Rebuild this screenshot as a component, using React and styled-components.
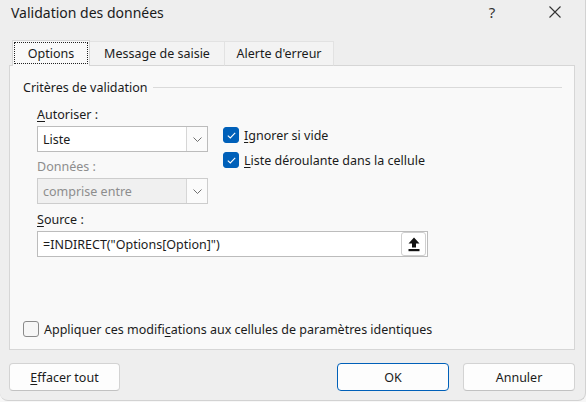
import React from 'react'
import styled, { createGlobalStyle } from 'styled-components'

const GlobalStyle = createGlobalStyle`
  html, body {
    margin: 0;
    padding: 0;
    background: #f7f7f7;
  }
  body {
    font-family: 'Noto Sans', 'Open Sans', sans-serif;
    font-size: 12.5px;
    color: #1b1b1b;
  }
`

const Dialog = styled.div`
  width: 586px;
  height: 401px;
  box-sizing: border-box;
  background: #eeeeee;
  border-right: 1px solid #d2d2d2;
  border-bottom: 1px solid #d2d2d2;
  border-radius: 0 0 8px 8px;
  display: flex;
  flex-direction: column;
  overflow: hidden;
`

const TitleBar = styled.div`
  height: 24px;
  display: flex;
  align-items: center;
  padding: 0 10px 0 11px;
`

const Title = styled.div`
  flex: 1;
  font-size: 14px;
  color: #1a1a1a;
`

const TitleButton = styled.div`
  width: 40px;
  height: 24px;
  display: flex;
  align-items: center;
  justify-content: center;
  font-size: 15px;
  color: #333;
  margin-left: ${p => p.gap || 0}px;
`

const Body = styled.div`
  flex: 1;
  display: flex;
  flex-direction: column;
  padding: 16px 10px 0 9px;
`

const TabRow = styled.div`
  display: flex;
  align-items: flex-end;
  height: 26px;
  padding-left: 3px;
  position: relative;
  z-index: 1;
  margin-bottom: -1px;
`

const Tab = styled.div`
  box-sizing: border-box;
  width: ${p => p.width}px;
  height: ${p => (p.active ? 26 : 25)}px;
  display: flex;
  align-items: center;
  justify-content: center;
  background: ${p => (p.active ? '#f9f9f9' : '#f3f3f3')};
  border: 1px solid ${p => (p.active ? '#d6d6d6' : '#e2e2e2')};
  border-bottom: ${p => (p.active ? 'none' : '1px solid #d6d6d6')};
  border-left: ${p => (p.noLeft ? 'none' : undefined)};
  padding: ${p => (p.active ? '1px 1px 2px' : '0 0 1px')};
`

const FocusRing = styled.span`
  flex: 1;
  align-self: stretch;
  display: flex;
  align-items: center;
  justify-content: center;
  border: 1px dotted #222;
`

const Panel = styled.div`
  box-sizing: border-box;
  height: 285px;
  background: #f9f9f9;
  border: 1px solid #d6d6d6;
  padding: 12px 12px 12px 13px;
  display: flex;
  flex-direction: column;
`

const GroupHeader = styled.div`
  display: flex;
  align-items: center;
  gap: 5px;
  height: 18px;
  &::after {
    content: '';
    flex: 1;
    height: 1px;
    background: #dadada;
  }
`

const GroupBody = styled.div`
  padding-left: 14px;
  display: flex;
  flex-direction: column;
`

const Label = styled.div`
  height: 17px;
  line-height: 17px;
  margin-top: ${p => p.top || 0}px;
  color: ${p => (p.disabled ? '#8d8d8d' : '#1b1b1b')};
`

const Key = styled.span`
  text-decoration: underline;
  text-underline-offset: 2px;
`

const FieldRow = styled.div`
  display: flex;
  gap: 15px;
  margin-top: 3px;
`

const LeftColumn = styled.div`
  width: 171px;
  display: flex;
  flex-direction: column;
`

const CheckColumn = styled.div`
  display: flex;
  flex-direction: column;
  gap: 9px;
  padding-top: 1px;
`

const Select = styled.div`
  box-sizing: border-box;
  height: 26px;
  display: flex;
  background: ${p => (p.disabled ? '#f0f0f0' : '#ffffff')};
  border: 1px solid ${p => (p.disabled ? '#cdcdcd' : '#bcbcbc')};
  margin-top: ${p => p.top || 0}px;
`

const SelectValue = styled.div`
  flex: 1;
  display: flex;
  align-items: center;
  padding-left: 5px;
  color: ${p => (p.disabled ? '#8d8d8d' : '#1b1b1b')};
`

const SelectButton = styled.div`
  width: 20px;
  display: flex;
  align-items: center;
  justify-content: center;
  background: #fbfbfb;
  border-left: 1px solid #d6d6d6;
`

const CheckRow = styled.label`
  display: flex;
  align-items: center;
  gap: 5px;
  height: 16px;
`

const Box = styled.span`
  box-sizing: border-box;
  width: 16px;
  height: 16px;
  border-radius: 3px;
  display: flex;
  align-items: center;
  justify-content: center;
  background: ${p => (p.checked ? '#0060b9' : '#f6f6f6')};
  border: 1px solid ${p => (p.checked ? '#0060b9' : '#8a8a8a')};
`

const SourceInput = styled.div`
  box-sizing: border-box;
  width: 391px;
  height: 26px;
  margin-top: 3px;
  display: flex;
  align-items: center;
  background: #ffffff;
  border: 1px solid #bcbcbc;
  padding: 0 1px 0 5px;
`

const SourceText = styled.div`
  flex: 1;
`

const RefButton = styled.div`
  box-sizing: border-box;
  width: 25px;
  height: 24px;
  border: 1px solid #cfcfcf;
  border-radius: 3px;
  background: #ffffff;
  display: flex;
  align-items: center;
  justify-content: center;
`

const Spacer = styled.div`
  flex: 1;
`

const Footer = styled.div`
  display: flex;
  align-items: center;
  padding-top: 13px;
`

const Button = styled.div`
  box-sizing: border-box;
  width: ${p => p.width}px;
  height: 28px;
  display: flex;
  align-items: center;
  justify-content: center;
  background: #fdfdfd;
  border: 1px solid ${p => (p.primary ? '#0060b9' : '#d3d3d3')};
  border-bottom-color: ${p => (p.primary ? '#0060b9' : '#c2c2c2')};
  border-radius: 4px;
  margin-left: ${p => p.gap || 0}px;
`

const Chevron = ({ color = '#606060' }) => (
  <svg width="9" height="5" viewBox="0 0 9 5">
    <path d="M0.5 0.5 L4.5 4.5 L8.5 0.5" fill="none" stroke={color} strokeWidth="0.9" />
  </svg>
)

const Check = () => (
  <svg width="9" height="7" viewBox="0 0 9 7">
    <path d="M0.8 3.6 L3.3 6 L8.2 0.9" fill="none" stroke="#fff" strokeWidth="1.1" />
  </svg>
)

const CloseIcon = () => (
  <svg width="12" height="12" viewBox="0 0 12 12">
    <path d="M0.5 0.5 L11.5 11.5 M11.5 0.5 L0.5 11.5" stroke="#333" strokeWidth="1.1" />
  </svg>
)

const CollapseIcon = () => (
  <svg width="12" height="15" viewBox="0 0 12 15">
    <path d="M6 0.5 L11.5 6.5 L8 6.5 L8 10.5 L4 10.5 L4 6.5 L0.5 6.5 Z" fill="#111" />
    <rect x="0.5" y="12" width="11" height="2.2" fill="#111" />
  </svg>
)

const tabs = [
  { label: 'Options', width: 78, active: true },
  { label: 'Message de saisie', width: 135 },
  { label: "Alerte d'erreur", width: 109 }
]

export default function App() {
  return (
    <Dialog>
      <GlobalStyle />
      <TitleBar>
        <Title>Validation des données</Title>
        <TitleButton>?</TitleButton>
        <TitleButton gap={23}>
          <CloseIcon />
        </TitleButton>
      </TitleBar>
      <Body>
        <TabRow>
          {tabs.map((tab, i) => (
            <Tab key={tab.label} width={tab.width} active={tab.active} noLeft={i > 0}>
              {tab.active ? <FocusRing>{tab.label}</FocusRing> : tab.label}
            </Tab>
          ))}
        </TabRow>
        <Panel>
          <GroupHeader>Critères de validation</GroupHeader>
          <GroupBody>
            <Label top={10}>
              <Key>A</Key>utoriser :
            </Label>
            <FieldRow>
              <LeftColumn>
                <Select>
                  <SelectValue>Liste</SelectValue>
                  <SelectButton>
                    <Chevron />
                  </SelectButton>
                </Select>
                <Label top={6} disabled>
                  Données :
                </Label>
                <Select top={3} disabled>
                  <SelectValue disabled>comprise entre</SelectValue>
                  <SelectButton>
                    <Chevron />
                  </SelectButton>
                </Select>
              </LeftColumn>
              <CheckColumn>
                <CheckRow>
                  <Box checked>
                    <Check />
                  </Box>
                  <span>
                    <Key>I</Key>gnorer si vide
                  </span>
                </CheckRow>
                <CheckRow>
                  <Box checked>
                    <Check />
                  </Box>
                  <span>
                    <Key>L</Key>iste déroulante dans la cellule
                  </span>
                </CheckRow>
              </CheckColumn>
            </FieldRow>
            <Label top={7}>
              <Key>S</Key>ource :
            </Label>
            <SourceInput>
              <SourceText>=INDIRECT("Options[Option]")</SourceText>
              <RefButton>
                <CollapseIcon />
              </RefButton>
            </SourceInput>
          </GroupBody>
          <Spacer />
          <CheckRow>
            <Box />
            <span>
              Appliquer ces modifi<Key>c</Key>ations aux cellules de paramètres identiques
            </span>
          </CheckRow>
        </Panel>
        <Footer>
          <Button width={111}>
            <span>
              <Key>E</Key>ffacer tout
            </span>
          </Button>
          <Spacer />
          <Button width={112} primary>
            OK
          </Button>
          <Button width={112} gap={14}>
            Annuler
          </Button>
        </Footer>
      </Body>
    </Dialog>
  )
}
